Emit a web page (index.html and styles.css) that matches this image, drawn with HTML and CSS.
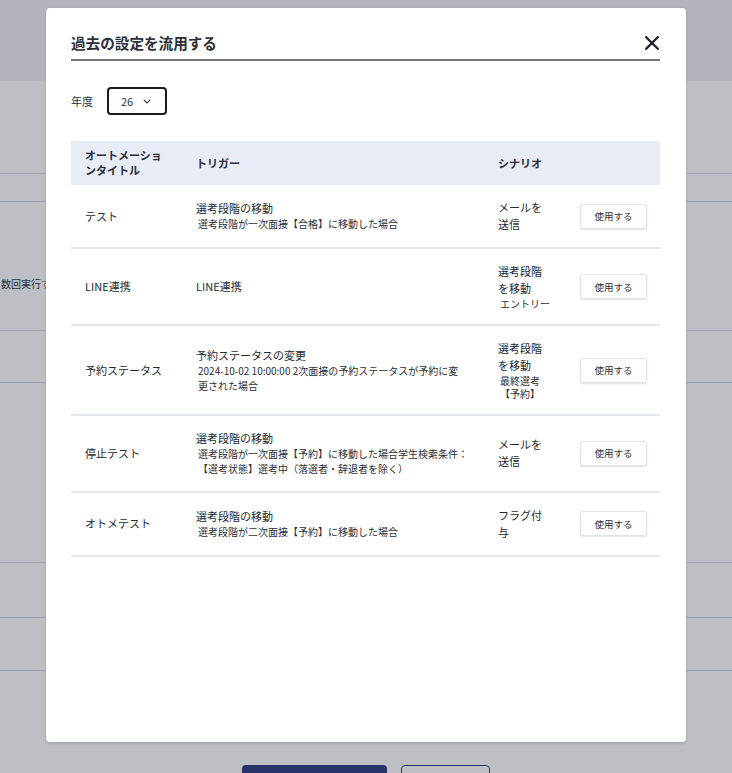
FILE: index.html
```html
<!DOCTYPE html>
<html lang="ja">
<head>
<meta charset="utf-8">
<title>過去の設定を流用する</title>
<link rel="stylesheet" href="styles.css">
</head>
<body>
<div class="page">
  <div class="topband"></div>
  <div class="bg-row r1"></div>
  <div class="bg-row r2"></div>
  <div class="bg-row r3"><span class="bg-text">数回実行<span class="bg-accent">す</span>る</span></div>
  <div class="bg-row r4"></div>
  <div class="bg-row r5"></div>
  <div class="bg-row r6"></div>
  <div class="bg-row r7"></div>
  <div class="bg-footer">
    <div class="bg-btn primary"></div>
    <div class="bg-btn outline"></div>
  </div>
</div>

<div class="modal">
  <div class="modal-head">
    <h1 class="modal-title">過去の設定を流用する</h1>
    <svg class="close" viewBox="0 0 14 14" width="14" height="14" aria-label="閉じる">
      <path d="M1.2 1.2 L12.8 12.8 M12.8 1.2 L1.2 12.8" stroke="#23272f" stroke-width="2.3" stroke-linecap="square" fill="none"/>
    </svg>
  </div>

  <div class="year">
    <span class="year-label">年度</span>
    <div class="select">
      <span>26</span>
      <svg viewBox="0 0 10 6" width="8" height="5"><path d="M1 1 L5 5 L9 1" stroke="#222" stroke-width="1.3" fill="none"/></svg>
    </div>
  </div>

  <table class="list">
    <colgroup>
      <col class="c-title"><col class="c-trigger"><col class="c-scenario"><col class="c-action">
    </colgroup>
    <thead>
      <tr>
        <th>オートメーションタイトル</th>
        <th>トリガー</th>
        <th>シナリオ</th>
        <th></th>
      </tr>
    </thead>
    <tbody>
      <tr>
        <td>テスト</td>
        <td><div class="main">選考段階の移動</div><div class="sub">選考段階が一次面接【合格】に移動した場合</div></td>
        <td><div class="main">メールを送信</div></td>
        <td><button class="use">使用する</button></td>
      </tr>
      <tr>
        <td>LINE連携</td>
        <td><div class="main">LINE連携</div></td>
        <td><div class="main">選考段階を移動</div><div class="sub2">エントリー</div></td>
        <td><button class="use">使用する</button></td>
      </tr>
      <tr>
        <td>予約ステータス</td>
        <td><div class="main">予約ステータスの変更</div><div class="sub">2024-10-02 10:00:00 2次面接の予約ステータスが予約に変<br>更された場合</div></td>
        <td><div class="main">選考段階を移動</div><div class="sub2">最終選考【予約】</div></td>
        <td><button class="use">使用する</button></td>
      </tr>
      <tr>
        <td>停止テスト</td>
        <td><div class="main">選考段階の移動</div><div class="sub">選考段階が一次面接【予約】に移動した場合学生検索条件：【選考状態】選考中（落選者・辞退者を除く）</div></td>
        <td><div class="main">メールを送信</div></td>
        <td><button class="use">使用する</button></td>
      </tr>
      <tr>
        <td>オトメテスト</td>
        <td><div class="main">選考段階の移動</div><div class="sub">選考段階が二次面接【予約】に移動した場合</div></td>
        <td><div class="main">フラグ付与</div></td>
        <td><button class="use">使用する</button></td>
      </tr>
    </tbody>
  </table>
</div>
</body>
</html>
```

FILE: styles.css
```css
* { box-sizing: border-box; }
html, body {
  margin: 0;
  padding: 0;
}
body {
  width: 732px;
  height: 773px;
  overflow: hidden;
  background: #bcbfc4;
  font-family: "Noto Sans CJK JP", "Noto Sans", sans-serif;
  color: #222831;
  position: relative;
}

/* background page (under overlay) */
.page { width: 732px; }
.topband { height: 81px; background: #b1b4bc; }
.bg-row { border-bottom: 1px solid #9aa2b1; }
.r1 { height: 93px; }
.r2 { height: 28px; }
.r3 { height: 129px; padding-top: 75px; }
.r4 { height: 52px; }
.r5 { height: 180px; }
.r6 { height: 55px; }
.r7 { height: 53px; }
.bg-text {
  display: block;
  padding-left: 1px;
  font-size: 10px;
  line-height: 14px;
  color: #2a3040;
  white-space: nowrap;
}
.bg-accent { color: #8a6a3a; }
.bg-footer {
  display: flex;
  justify-content: center;
  gap: 14px;
  margin-top: 94px;
}
.bg-btn { height: 34px; border-radius: 4px; }
.bg-btn.primary { width: 145px; background: #283369; }
.bg-btn.outline { width: 89px; border: 1px solid #283369; background: #bcbfc4; }

/* modal */
.modal {
  position: absolute;
  top: 8px;
  left: 46px;
  width: 640px;
  height: 734px;
  background: #fff;
  border-radius: 4px;
  box-shadow: 0 1px 3px rgba(0,0,0,0.18);
  padding: 0 26px 0 25px;
}
.modal-head {
  display: flex;
  align-items: center;
  justify-content: space-between;
  height: 53px;
  padding-top: 19px;
  border-bottom: 2px solid #75787e;
}
.modal-title {
  margin: 0;
  font-size: 14.6px;
  font-weight: 700;
  color: #2b2f38;
  line-height: 20px;
}
.close { width: 14px; height: 14px; margin-right: 1px; }

.year {
  display: flex;
  align-items: center;
  margin-top: 26px;
  gap: 14px;
}
.year-label { font-size: 11px; color: #2b2f38; }
.select {
  width: 60px;
  height: 28px;
  border: 2px solid #1c1c1c;
  border-radius: 4px;
  display: flex;
  align-items: center;
  padding-left: 12px;
  gap: 10px;
  font-size: 11px;
  color: #333;
}

.list {
  margin-top: 26px;
  width: 589px;
  border-collapse: collapse;
  table-layout: fixed;
}
.c-title { width: 111px; }
.c-trigger { width: 302px; }
.c-scenario { width: 82px; }
.c-action { width: 94px; }

.list th {
  background: #e8ecf6;
  height: 44px;
  padding: 0 14px;
  text-align: left;
  font-size: 11px;
  font-weight: 700;
  line-height: 15px;
  color: #2b2f38;
}
.list td {
  padding: 14px 14px;
  vertical-align: middle;
  font-size: 11px;
  line-height: 17px;
  border-bottom: 2px solid #e4e7ee;
}
.main { font-size: 11px; line-height: 17px; }
.sub {
  font-size: 10px;
  line-height: 14.8px;
  padding-left: 2px;
  color: #2a2f38;
}
.sub2 {
  font-size: 10px;
  line-height: 13px;
  padding-left: 2px;
  color: #2a2f38;
}
.use {
  width: 67px;
  height: 25px;
  background: #fff;
  border: 1px solid #e0e3ea;
  border-radius: 3px;
  box-shadow: 0 1px 2px rgba(0,0,0,0.12);
  font-family: inherit;
  font-size: 9.5px;
  color: #2b2f38;
  padding: 0;
}
```
